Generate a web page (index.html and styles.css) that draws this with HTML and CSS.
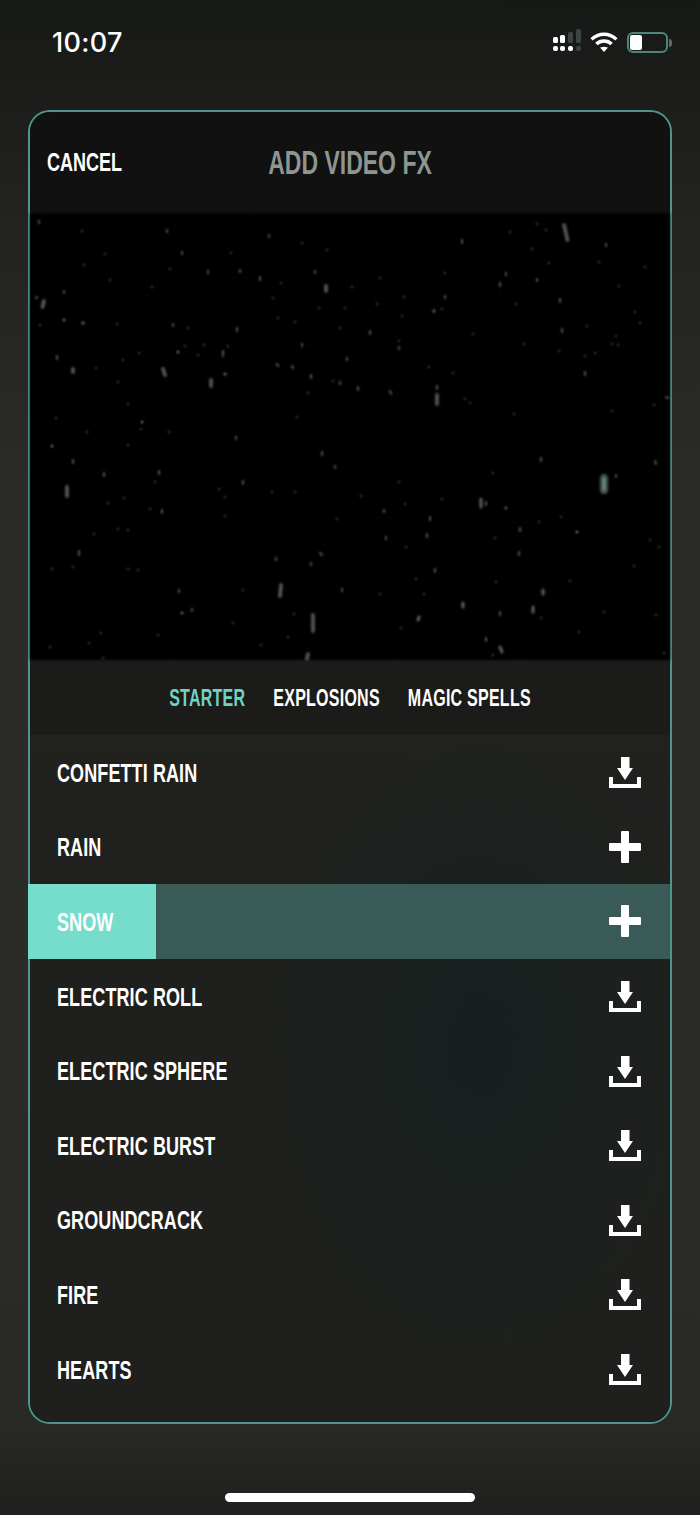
FILE: index.html
```html
<!DOCTYPE html>
<html lang="en">
<head>
<meta charset="utf-8">
<title>Add Video FX</title>
<link rel="stylesheet" href="styles.css">
</head>
<body>
<svg class="defs" aria-hidden="true">
  <symbol id="i-download" viewBox="0 0 32 32"><path d="M0 21h4v7h24v-7h4v11H0zM12 1h8.500v11h3.500L16 24 8 12h4z"/></symbol>
  <symbol id="i-plus" viewBox="0 0 32 32"><path d="M13 0h6a1 1 0 0 1 1 1v11h11a1 1 0 0 1 1 1v6a1 1 0 0 1-1 1H20v11a1 1 0 0 1-1 1h-6a1 1 0 0 1-1-1V20H1a1 1 0 0 1-1-1v-6a1 1 0 0 1 1-1h11V1a1 1 0 0 1 1-1z"/></symbol>
</svg>
<main class="screen">
  <header class="status">
    <span class="time">10:07</span>
    <div class="status-icons">
      <svg class="signal" width="29" height="23" viewBox="0 0 29 23">
        <g fill="#fff">
          <rect x="0" y="8" width="5" height="6" rx="1.500"/><rect x="7" y="6" width="5" height="8" rx="1.500"/>
          <rect x="0" y="17" width="5" height="5" rx="2"/><rect x="7" y="17" width="5" height="5" rx="2"/><rect x="15" y="17" width="5" height="5" rx="2"/>
        </g>
        <g fill="#3c4543">
          <rect x="15" y="3" width="5" height="11" rx="1.500"/><rect x="23" y="0" width="5" height="14" rx="1.500"/><rect x="23" y="17" width="5" height="5" rx="2"/>
        </g>
      </svg>
      <svg class="wifi" width="28" height="20" viewBox="0 0 28 20" fill="none" stroke="#fff" stroke-width="3.400">
        <path d="M1.600 7.400C8.600.6 19.400.6 26.400 7.400"/><path d="M6.400 12C10.600 8 17.400 8 21.600 12"/>
        <path d="M10 15.600l4-0.900 4 .9-4 4.400z" fill="#fff" stroke="none"/>
      </svg>
      <div class="battery"><div class="battery-fill"></div></div>
      <div class="battery-nub"></div>
    </div>
  </header>

  <section class="panel">
    <div class="panel-head">
      <button class="cancel"><span class="tall">CANCEL</span></button>
      <h1 class="title"><span class="tall">ADD VIDEO FX</span></h1>
    </div>

    <svg class="video" viewBox="30 213 640 447" preserveAspectRatio="none" fill="none" stroke-linecap="round">
      <path stroke="#2c302f" stroke-width="1" d="M46 214h0M60 238h0M73 234h0M91 222h0M103 222h0M140 218h0M155 224h0M175 225h0M195 224h0M215 226h0M250 215h0M290 232h0M310 220h0M340 226h0M66 251h0M98 260h0M121 262h0M140 244h0M188 258h0M200 250h0M225 240h0M255 245h0M280 250h0M322 238h0M74 283h0M93 297h0M124 296h0M148 295h0M195 300h0M220 290h0M250 292h0M300 295h0M331 300h0M75 330h0M90 345h0M110 335h0M133 337h0M160 310h0M205 315h0M245 318h0M265 340h0M310 345h0M325 330h0M50 350h0M70 370h0M85 348h0M110 350h0M150 368h0M198 372h0M240 365h0M270 350h0M330 350h0M75 400h0M95 395h0M110 415h0M145 385h0M192 398h0M240 390h0M260 388h0M275 400h0M320 410h0M345 422h0M47 434h0M100 425h0M120 428h0M210 428h0M255 435h0M280 430h0M400 215h0M440 222h0M470 225h0M490 213h0M520 215h0M580 220h0M630 222h0M650 225h0M360 265h0M384 250h0M410 245h0M438 280h0M466 262h0M490 270h0M560 268h0M620 240h0M660 250h0M375 295h0M415 285h0M470 300h0M500 295h0M540 290h0M600 305h0M660 300h0M360 350h0M380 335h0M420 335h0M450 330h0M490 340h0M540 360h0M610 320h0M650 340h0M366 365h0M400 380h0M430 400h0M490 385h0M560 395h0M590 372h0M640 380h0M360 405h0M405 425h0M445 420h0M480 430h0M520 412h0M575 400h0M620 405h0M655 425h0M40 450h0M78 470h0M95 480h0M120 462h0M180 470h0M210 445h0M250 470h0M290 480h0M310 465h0M60 515h0M90 520h0M150 500h0M180 500h0M240 505h0M300 510h0M345 495h0M50 540h0M85 560h0M120 545h0M160 555h0M200 540h0M235 560h0M280 530h0M325 545h0M345 540h0M65 590h0M120 590h0M150 580h0M200 580h0M245 570h0M305 590h0M330 610h0M70 610h0M110 620h0M140 625h0M205 620h0M265 630h0M320 640h0M40 640h0M90 650h0M170 655h0M230 650h0M340 645h0M370 460h0M400 470h0M440 480h0M470 470h0M520 490h0M560 480h0M620 490h0M650 500h0M360 530h0M400 520h0M450 520h0M480 560h0M550 540h0M600 540h0M640 550h0M355 590h0M385 570h0M460 580h0M510 590h0M560 600h0M620 580h0M650 590h0M370 620h0M420 640h0M460 630h0M530 630h0M590 640h0M640 630h0M395 655h0M450 650h0M520 655h0M610 650h0"/>
      <path stroke="#555a58" stroke-width="2" d="M39 221v2M82 231h0M167 230v2M269 235v2M182 252v2M105 254h0M231 253h0M302 243h0M327 250h0M84 265h0M170 269h0M208 271v2M240 270v2M315 271v2M260 277v3M281 283h0M110 280h0M152 287h0M64 291v2M36 298l1-1M273 298h0M319 308h0M345 308h0M83 323h0M40 325h0M117 324h0M173 324v2M237 328v3M278 318h0M295 322h0M188 328h0M340 328h0M204 345h0M228 346h0M302 344v2M185 346h0M223 351v5M198 355h0M139 353h0M57 356v3M123 360h0M347 358v2M277 364l1 2M292 366l1 2M311 375v3M225 374h0M96 368h0M118 382h0M333 381h0M340 382v2M308 393h0M56 418h0M141 429h0M87 432h0M169 432h0M236 437v2M297 417h0M128 404h0M462 240v3M537 224h0M510 232h0M546 230h0M606 244v2M532 249h0M599 262h0M645 267h0M549 263h0M445 273h0M506 273v2M380 278h0M537 279v2M500 283v3M619 286h0M352 287h0M404 297h0M445 296v2M560 299v3M377 304h0M516 304h0M442 309h0M635 312h0M402 316h0M640 323h0M587 326h0M562 329v3M370 331v3M473 334h0M616 336h0M399 341h0M524 344h0M612 344h0M618 345h0M399 347v2M559 351h0M595 353h0M585 356h0M429 367h0M453 373h0M585 372v3M358 387v3M390 391l1 3M465 399h0M470 403h0M654 405h0M612 411h0M666 397l2 1M514 414h0M437 386v3M52 446h0M128 445h0M73 460v3M104 473v3M159 471v3M155 482h0M243 481v3M219 489h0M272 492h0M295 492h0M225 497h0M124 498h0M108 503h0M162 510v3M150 509h0M322 452v3M335 466v2M225 516h0M337 519h0M118 529h0M128 530h0M94 534h0M79 551v4M320 553l2 2M276 558v2M311 563v2M52 569h0M73 567h0M128 569h0M138 570h0M342 589v2M179 590v2M243 590h0M192 609v2M294 614h0M233 623h0M288 637h0M261 645h0M158 635h0M101 633h0M50 647h0M89 643h0M103 658h0M541 458v3M655 461l1 3M616 475v2M399 482h0M493 473h0M361 496h0M486 502v3M405 504h0M442 499h0M384 510v2M430 517v3M539 522h0M561 517h0M520 528v3M427 534v3M386 537v2M495 538h0M659 547h0M650 540h0M519 552v3M406 547h0M634 566h0M435 569v3M416 579h0M496 582h0M570 581h0M380 594h0M424 594h0M604 612h0M500 612v3M541 618h0M401 628h0M486 638v3M656 615h0M579 632h0M664 653h0M493 655h0"/>
      <path stroke="#6c9e98" stroke-width="2.400" d="M64 320h0M178 352h0M142 422h0M506 508h0M577 532h0M52 446h0M182 613h0"/>
      <path stroke="#6f7778" stroke-width="3" d="M83 323h0M434 311h0M225 374h0"/>
      <path stroke="#505552" stroke-width="3.800" d="M564 225l3.500 15M281 585l-1 11M67 487v9M313 615v16M308 654l-1 5M163 369l2 6M211 380v6M44 301l-1.500 6M326 286v5M73 369v3M437 395v9"/>
      <path stroke="#5b605d" stroke-width="3" d="M500 647l2 5M481 499v8M463 603v4M419 617l-1 3M543 590v4M533 607v5"/>
      <path stroke="#232926" stroke-width="9" d="M604 478v12"/>
      <path stroke="#4a5551" stroke-width="7" d="M604 478v12"/>
      <path stroke="#5c8f88" stroke-width="3" d="M604 479v10"/>
    </svg>

    <nav class="tabs">
      <span class="tab tab-active"><span class="tall">STARTER</span></span>
      <span class="tab"><span class="tall">EXPLOSIONS</span></span>
      <span class="tab"><span class="tall">MAGIC SPELLS</span></span>
    </nav>

    <ul class="fx-list">
      <li class="fx"><span class="fx-name tall">CONFETTI RAIN</span><svg class="fx-icon"><use href="#i-download"/></svg></li>
      <li class="fx"><span class="fx-name tall">RAIN</span><svg class="fx-icon"><use href="#i-plus"/></svg></li>
      <li class="fx fx-selected"><span class="fx-progress" style="width:128px"></span><span class="fx-name tall">SNOW</span><svg class="fx-icon"><use href="#i-plus"/></svg></li>
      <li class="fx"><span class="fx-name tall">ELECTRIC ROLL</span><svg class="fx-icon"><use href="#i-download"/></svg></li>
      <li class="fx"><span class="fx-name tall">ELECTRIC SPHERE</span><svg class="fx-icon"><use href="#i-download"/></svg></li>
      <li class="fx"><span class="fx-name tall">ELECTRIC BURST</span><svg class="fx-icon"><use href="#i-download"/></svg></li>
      <li class="fx"><span class="fx-name tall">GROUNDCRACK</span><svg class="fx-icon"><use href="#i-download"/></svg></li>
      <li class="fx"><span class="fx-name tall">FIRE</span><svg class="fx-icon"><use href="#i-download"/></svg></li>
      <li class="fx"><span class="fx-name tall">HEARTS</span><svg class="fx-icon"><use href="#i-download"/></svg></li>
    </ul>
  </section>

  <div class="home-bar"></div>
</main>
</body>
</html>
```

FILE: styles.css
```css
* { box-sizing: border-box; }

html, body {
  margin: 0;
  padding: 0;
  background: #1e1f1d;
}

.defs {
  position: absolute;
  width: 0;
  height: 0;
}

.screen {
  width: 700px;
  height: 1515px;
  overflow: hidden;
  display: flex;
  flex-direction: column;
  font-family: "Liberation Sans Narrow", "Liberation Sans", sans-serif;
  font-weight: 700;
  color: #fff;
  background:
    linear-gradient(180deg, #171917 0, #1c1d1b 90px, #23241f 230px, #2b2c27 500px, #2b2c27 1000px, #292a25 1420px, #1f201e 1515px);
}

.tall {
  display: inline-block;
  transform: translateY(1px) scaleY(1.47);
  white-space: nowrap;
}

/* status bar */
.status {
  height: 110px;
  flex: none;
  display: flex;
  justify-content: space-between;
  padding: 27px 28px 0 52px;
}

.time {
  font-family: Inter, "Liberation Sans", sans-serif;
  font-size: 27px;
  font-weight: 500;
  line-height: 32px;
  letter-spacing: 0.3px;
}

.status-icons {
  display: flex;
  align-items: flex-start;
  padding-top: 2px;
}

.wifi {
  margin: 3px 0 0 8px;
}

.battery {
  width: 41px;
  height: 21px;
  margin: 3px 0 0 9px;
  padding: 1px;
  border: 2px solid #4f857e;
  border-radius: 6px;
}

.battery-fill {
  width: 12px;
  height: 100%;
  background: #fff;
  border-radius: 2px;
}

.battery-nub {
  width: 3px;
  height: 8px;
  margin: 10px 0 0 1px;
  background: #5f6b68;
  border-radius: 0 3px 3px 0;
}

/* panel */
.panel {
  flex: none;
  width: 644px;
  height: 1313.500px;
  margin-left: 28px;
  border: 2px solid #4b978c;
  border-radius: 22px;
  display: flex;
  flex-direction: column;
  background: #1f201e;
}

.panel-head {
  height: 101px;
  flex: none;
  position: relative;
  display: flex;
  align-items: center;
  justify-content: center;
  background: #101110;
  border-radius: 20px 20px 0 0;
}

.cancel {
  position: absolute;
  left: 17px;
  top: 35px;
  padding: 0;
  border: 0;
  background: none;
  color: #fff;
  font: 700 18px/28px "Liberation Sans Narrow", "Liberation Sans", sans-serif;
}

.title {
  margin: 0 0 4px;
  color: #8d9691;
  font-size: 23px;
  font-weight: 700;
  line-height: 32px;
}

.video {
  display: block;
  flex: none;
  width: 640px;
  height: 447px;
  background: #000;
  filter: blur(0.8px);
}

.tabs {
  flex: none;
  height: 75px;
  display: flex;
  justify-content: center;
  align-items: center;
  gap: 28px;
  background: #1b1c1a;
  font-size: 16px;
  letter-spacing: 0.25px;
}

.tab-active { color: #6fd3c4; }

.fx-list {
  flex: 1;
  margin: 0;
  padding: 0;
  list-style: none;
  border-radius: 0 0 20px 20px;
  background:
    radial-gradient(ellipse 220px 320px at 450px 310px, #17201f 0, rgba(23, 32, 31, 0) 100%),
    linear-gradient(180deg, #21221e 0, #1f201e 200px);
}

.fx {
  position: relative;
  height: 74.6px;
  display: flex;
  align-items: center;
  justify-content: space-between;
  padding: 0 29px 0 27px;
  font-size: 18px;
  letter-spacing: 0.1px;
}

.fx-selected {
  margin: 0 0 0 -2px;
  padding-left: 29px;
  background: #3a5a58;
}

.fx-progress {
  position: absolute;
  left: 0;
  top: 0;
  bottom: 0;
  background: #76dccc;
}

.fx-name { position: relative; }

.fx-icon {
  position: relative;
  width: 32px;
  height: 32px;
  fill: #fff;
}

.home-bar {
  flex: none;
  width: 250px;
  height: 9px;
  margin: 69.500px 0 0 225px;
  background: #fff;
  border-radius: 5px;
}
```
